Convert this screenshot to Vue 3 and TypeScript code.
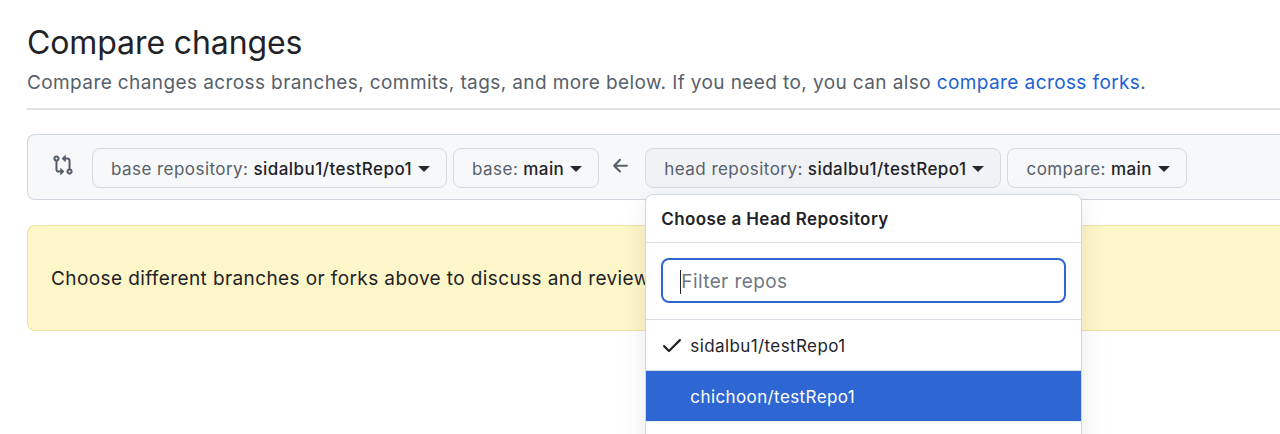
<script setup lang="ts">
const baseBranches = [
  { label: 'base repository:', value: 'sidalbu1/testRepo1' },
  { label: 'base:', value: 'main' },
]
const headBranches = [
  { label: 'head repository:', value: 'sidalbu1/testRepo1', open: true },
  { label: 'compare:', value: 'main', open: false },
]
</script>

<template>
  <div class="viewport">
    <main class="page">
      <header class="head">
        <h1 class="title">Compare changes</h1>
        <p class="lead">
          Compare changes across branches, commits, tags, and more below. If you need to, you can also
          <a class="link">compare across forks</a>.
        </p>
      </header>

      <section class="range">
        <svg class="compare-icon" viewBox="0 0 16 16" width="22" height="22" fill="currentColor">
          <path d="M9.573.677A.25.25 0 0 1 10 .854V2.5h1A2.5 2.5 0 0 1 13.5 5v5.628a2.251 2.251 0 1 1-1.5 0V5a1 1 0 0 0-1-1h-1v1.646a.25.25 0 0 1-.427.177L7.177 3.427a.25.25 0 0 1 0-.354ZM6 12v-1.646a.25.25 0 0 1 .427-.177l2.396 2.396a.25.25 0 0 1 0 .354l-2.396 2.396A.25.25 0 0 1 6 15.146V13.5H5A2.5 2.5 0 0 1 2.5 11V5.372a2.25 2.25 0 1 1 1.5 0V11a1 1 0 0 0 1 1ZM4 3.25a.75.75 0 1 0-1.5 0 .75.75 0 0 0 1.5 0ZM12.75 12a.75.75 0 1 0 0 1.5.75.75 0 0 0 0-1.5Z" />
        </svg>
        <div class="group">
          <button v-for="b in baseBranches" :key="b.label" class="select" type="button">
            <span class="select-label">{{ b.label }}</span>
            <strong class="select-value">{{ b.value }}</strong>
            <i class="caret" />
          </button>
        </div>
        <svg class="arrow" viewBox="0 0 16 16" width="22" height="22" fill="currentColor">
          <path d="M7.78 12.53a.75.75 0 0 1-1.06 0L2.47 8.28a.75.75 0 0 1 0-1.06l4.25-4.25a.751.751 0 0 1 1.042.018.751.751 0 0 1 .018 1.042L4.81 7h7.44a.75.75 0 0 1 0 1.5H4.81l2.97 2.97a.75.75 0 0 1 0 1.06Z" />
        </svg>
        <div class="group">
          <div v-for="b in headBranches" :key="b.label" class="select-wrap">
            <button class="select" :class="{ active: b.open }" type="button">
              <span class="select-label">{{ b.label }}</span>
              <strong class="select-value">{{ b.value }}</strong>
              <i class="caret" />
            </button>
            <div v-if="b.open" class="menu">
              <div class="menu-title">Choose a Head Repository</div>
              <div class="menu-filter">
                <div class="filter-input"><i class="text-cursor" /><span>Filter repos</span></div>
              </div>
              <div class="menu-item">
                <svg class="check" viewBox="0 0 16 16" width="24" height="24" fill="currentColor">
                  <path d="M13.78 4.22a.75.75 0 0 1 0 1.06l-7.25 7.25a.75.75 0 0 1-1.06 0L2.22 9.28a.751.751 0 0 1 .018-1.042.751.751 0 0 1 1.042-.018L6 10.94l6.72-6.72a.75.75 0 0 1 1.06 0Z" />
                </svg>
                <span>sidalbu1/testRepo1</span>
              </div>
              <div class="menu-item selected"><span>chichoon/testRepo1</span></div>
              <div class="menu-item"></div>
            </div>
          </div>
        </div>
      </section>

      <div class="flash">Choose different branches or forks above to discuss and review changes.</div>
    </main>
  </div>
</template>

<style>
html,
body {
  margin: 0;
  overflow: hidden;
  background: #fff;
}
</style>

<style scoped>
.viewport {
  width: 1280px;
  height: 434px;
  overflow: hidden;
  font-family: Inter, "Liberation Sans", sans-serif;
  color: #1f2328;
  letter-spacing: 0.4px;
}
.page {
  width: 1300px;
  padding: 22px 0 0 27px;
  box-sizing: border-box;
}
.head {
  border-bottom: 2px solid #dfe3e8;
  padding-bottom: 12px;
}
.title {
  margin: 0;
  font-size: 32px;
  line-height: 42px;
  font-weight: 400;
  letter-spacing: -0.1px;
}
.lead {
  margin: 6px 0 0;
  font-size: 19px;
  line-height: 26px;
  color: #57606a;
  white-space: nowrap;
}
.link {
  color: #2161d4;
}
.range {
  margin-top: 24px;
  height: 66px;
  box-sizing: border-box;
  display: flex;
  align-items: center;
  gap: 14px;
  padding: 1px 0 0 24px;
  background: #f6f8fa;
  border: 1px solid #d0d7de;
  border-right: 0;
  border-radius: 8px 0 0 8px;
}
.compare-icon {
  color: #57606a;
  margin-right: 4px;
  position: relative;
  top: -3px;
}
.group {
  display: flex;
  gap: 6px;
}
.select-wrap {
  position: relative;
}
.select {
  height: 40px;
  padding: 2px 16px 0 18px;
  display: flex;
  align-items: center;
  gap: 5px;
  font: inherit;
  font-size: 17px;
  letter-spacing: 0.45px;
  background: #f6f8fa;
  border: 1px solid #d5dae0;
  border-radius: 8px;
  white-space: nowrap;
}
.select.active {
  background: #f0f2f5;
}
.select-label {
  color: #57606a;
}
.select-value {
  font-weight: 500;
  color: #1f2328;
}
.caret {
  width: 0;
  height: 0;
  margin-left: 1px;
  border-left: 6px solid transparent;
  border-right: 6px solid transparent;
  border-top: 6px solid #24292f;
}
.arrow {
  color: #57606a;
  margin: 0 -1px 0 -3px;
  position: relative;
  top: -2px;
}
.menu {
  position: absolute;
  z-index: 2;
  top: 46px;
  left: 0;
  width: 437px;
  box-sizing: border-box;
  background: #fff;
  border: 1px solid #d0d7de;
  border-radius: 8px 8px 0 0;
  box-shadow: 0 8px 24px rgba(140, 149, 159, 0.2);
}
.menu-title {
  height: 48px;
  box-sizing: border-box;
  padding: 2px 0 0 15px;
  display: flex;
  align-items: center;
  font-size: 17px;
  font-weight: 600;
  border-bottom: 1px solid #d8dee4;
}
.menu-filter {
  height: 77px;
  padding: 15px 15px 0;
  box-sizing: border-box;
  border-bottom: 1px solid #d8dee4;
}
.filter-input {
  height: 45px;
  box-sizing: border-box;
  padding: 3px 0 0 17px;
  display: flex;
  align-items: center;
  border: 2px solid #2f66d3;
  border-radius: 8px;
  font-size: 19px;
  color: #6e7781;
}
.text-cursor {
  width: 1px;
  height: 24px;
  background: #24292f;
  margin-right: 0;
}
.menu-item {
  height: 51px;
  box-sizing: border-box;
  position: relative;
  display: flex;
  align-items: center;
  padding: 3px 0 0 44px;
  font-size: 17px;
  border-bottom: 1px solid #d8dee4;
}
.selected {
  background: #2e66d3;
  color: #fff;
  border-bottom-color: #eaeef2;
}
.check {
  position: absolute;
  left: 14px;
  top: 13px;
}
.flash {
  margin-top: 25px;
  height: 106px;
  box-sizing: border-box;
  display: flex;
  align-items: center;
  padding-left: 23px;
  font-size: 19px;
  background: #fdf6c8;
  border: 1px solid #eee2a4;
  border-right: 0;
  border-radius: 8px 0 0 8px;
}
</style>
